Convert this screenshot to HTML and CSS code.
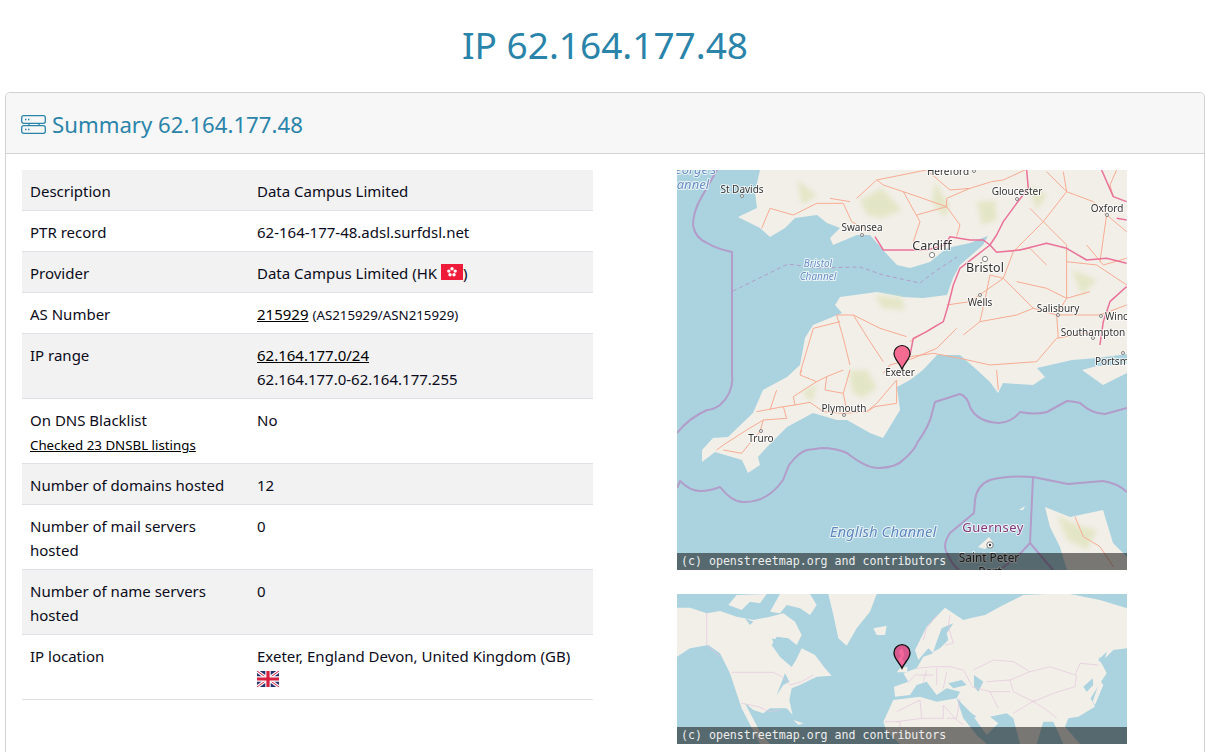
FILE: index.html
```html
<!DOCTYPE html>
<html lang="en">
<head>
  <meta charset="UTF-8" />
  <title>IP 62.164.177.48</title>
  <link rel="stylesheet" href="styles.css">
</head>
<body>

  <h1 class="page-title">IP 62.164.177.48</h1>

  <div class="card">
    <div class="card-header">
      <svg class="server-icon" viewBox="0 0 25 19" fill="none" stroke="currentColor" stroke-width="1.3">
        <rect x=".7" y=".7" width="23.600" height="7.600" rx="2"/>
        <rect x=".7" y="10.700" width="23.600" height="7.600" rx="2"/>
        <path d="M8 8.500v2M18 8.500v2"/>
        <path d="M4 4.500h1.400M7 4.500h1.400M4 14.500h1.400M7 14.500h1.400"/>
      </svg>
      <h2>Summary 62.164.177.48</h2>
    </div>

    <div class="card-body">
      <table class="info">
        <tr><td>Description</td><td>Data Campus Limited</td></tr>
        <tr><td>PTR record</td><td>62-164-177-48.adsl.surfdsl.net</td></tr>
        <tr>
          <td>Provider</td>
          <td>Data Campus Limited (HK <svg class="flag" viewBox="0 0 22 16"><rect width="22" height="16" fill="#ee1c3a"/><g fill="#fff"><circle cx="11" cy="4.800" r="1.700"/><circle cx="14.200" cy="7.100" r="1.700"/><circle cx="13" cy="10.800" r="1.700"/><circle cx="9" cy="10.800" r="1.700"/><circle cx="7.800" cy="7.100" r="1.700"/></g><circle cx="11" cy="8.200" r=".7" fill="#ee1c3a"/></svg>)</td>
        </tr>
        <tr><td>AS Number</td><td><a href="#">215929</a> <small>(AS215929/ASN215929)</small></td></tr>
        <tr><td>IP range</td><td><a href="#">62.164.177.0/24</a><br>62.164.177.0-62.164.177.255</td></tr>
        <tr><td>On DNS Blacklist<br><small><a href="#">Checked 23 DNSBL listings</a></small></td><td>No</td></tr>
        <tr><td>Number of domains hosted</td><td>12</td></tr>
        <tr><td>Number of mail servers hosted</td><td>0</td></tr>
        <tr><td>Number of name servers hosted</td><td>0</td></tr>
        <tr>
          <td>IP location</td>
          <td>Exeter, England Devon, United Kingdom (GB)<br>
            <svg class="flag" viewBox="0 0 22 16"><rect width="22" height="16" fill="#22306e"/><path d="M0 0L22 16M22 0L0 16" stroke="#fff" stroke-width="3.200"/><path d="M0 0L22 16M22 0L0 16" stroke="#d8203f" stroke-width="1"/><path d="M11 0V16M0 8H22" stroke="#fff" stroke-width="5.400"/><path d="M11 0V16M0 8H22" stroke="#d8203f" stroke-width="3.200"/></svg>
          </td>
        </tr>
      </table>

      <div class="maps">
        <div class="map map-local">
          <svg viewBox="0 0 450 400">
            <rect width="450" height="400" fill="#aad3df"/>
            <path class="land" d="M83 0L78 22 80 38 61 47 83 58 93 67 108 58 118 48 140 45 150 53 163 58 153 68 156 75 180 65 193 65 206 80 220 95 233 98 253 92 270 78 293 73 313 65 326 42 313 62 306 75 283 95 276 108 270 125 246 128 226 127 200 122 163 127 158 135 165 143 136 155 128 168 123 195 110 207 86 220 76 243 51 267 36 268 25 280 25 292 38 282 65 290 71 303 83 295 81 287 90 277 110 257 136 243 160 250 170 250 193 263 206 268 223 240 220 217 233 210 246 200 260 185 283 185 300 200 313 212 321 223 326 213 356 215 368 207 360 198 395 190 420 188 450 184V0Z"/>
            <path class="land" d="M405 200L420 196 450 194V203L426 215ZM368 337L393 347 426 340 436 373 450 387V400H390L383 377 373 357ZM301 377L312 367 316 372 308 379ZM342 340L348 336 346 340Z"/>
            <g class="green">
              <path d="M183 30L205 18 225 40 205 48 190 45Z"/>
              <path d="M258 12L272 35 268 48 255 32Z"/>
              <path d="M300 32L318 30 320 50 305 55Z"/>
              <path d="M198 125L225 128 228 140 205 138Z"/>
              <path d="M172 201L190 200 200 218 185 228 175 222Z"/>
              <path d="M125 222L140 215 135 232Z"/>
              <path d="M380 345L400 355 420 360 410 380 390 370ZM350 15L370 25 360 40ZM395 100L420 110 405 125ZM120 10L140 25 125 35Z"/>
            </g>
            <g class="sea-line">
              <path d="M40 0L24 28Q16 42 16 55Q18 68 30 73Q40 79 55 82L55 205Q57 222 43 235Q36 240 30 240Q12 248 0 263"/>
              <path d="M0 318L3 311Q13 321 23 321Q33 321 43 317Q55 332 66 332Q90 333 106 310L112 295Q122 282 130 280L145 278Q158 278 170 283Q190 299 203 298Q220 297 226 290Q238 280 240 273Q253 255 255 243L258 232 283 224Q290 226 293 237Q300 252 322 253Q335 252 343 242Q358 245 370 242L390 231Q400 232 403 233Q415 244 428 244L450 238"/>
              <path d="M450 322Q440 313 426 311L391 314 356 307Q330 305 313 310Q300 315 298 330L297 343 273 363Q265 375 270 383Q275 395 282 400"/>
              <path d="M356 307L353 373 340 387 325 398M353 373L376 400"/>
            </g>
            <path class="dashed" d="M56 121L111 94 140 98 183 97 206 105 243 113 256 103 280 87"/>

            <g transform="translate(-7 -5) scale(.3333)">
              <g class="road">
                <path d="M300 130L370 150 440 115 520 115 545 170 600 200M480 100L540 110M700 80L750 170 730 230M640 60L620 45 770 15M300 130L275 190M620 45L560 100M700 80L640 60"/>
                <path d="M740 150L830 125 830 100 900 70 965 50 1000 45M830 125L870 180 860 215M1000 45L1065 15M700 80L830 125M770 15L840 75 900 70"/>
                <path d="M1120 170L1190 240 1190 290 1190 400 1160 450 1165 520M1080 130L1120 170 1030 260 1000 340 960 330 950 380 930 470 880 510"/>
                <path d="M1120 170L1190 80 1270 110 1310 150 1300 220 1290 290M1000 340L1090 430 1160 450 1290 450M830 420L900 410 1000 340M930 470L1040 450 1090 430"/>
                <path d="M860 490L800 550 730 580 660 600 640 625M720 575L790 565 870 580 960 600 1100 590 1160 520 1270 500M1190 400L1260 380"/>
                <path d="M500 450L550 450 630 490 710 515M500 450L520 520 540 600M550 450L600 530 640 590M510 470L430 490 390 625M720 530L800 480"/>
                <path d="M1340 15L1320 60 1330 95M1250 240L1300 300 1370 280M1010 260L1080 250 1130 300M1180 20L1190 80 1130 20M1310 150L1370 200M1190 290L1280 300 1340 340 1370 360M1040 350L1130 370 1190 400M1290 450L1370 420"/>
              </g>
              <g class="motorway">
                <path d="M1070 15L1075 70 1040 115 1000 170 980 210 960 240 940 225 900 225 840 215 825 240 770 255 700 255 640 255 615 215"/>
                <path d="M960 240L980 262 1050 255 1130 235 1190 250 1250 285 1310 280 1370 295"/>
                <path d="M960 240L870 310 850 360 835 420 820 470 770 500 730 520 720 570"/>
                <path d="M1370 365L1320 410 1300 470 1290 540M1295 15L1330 95 1370 110M1340 160L1370 165"/>
              </g>
            </g>
            <g transform="translate(-7 200) scale(.3333)">
              <g class="road">
                <path d="M395 0L390 15 440 35 470 20 520 0M440 35L370 80 375 105 340 110 260 125M375 105L420 97 460 125 520 130 590 125 615 110 680 100 680 30"/>
                <path d="M470 20L465 60 520 70 530 120M540 0L520 70M340 110L350 145 280 150 230 180 160 225 140 240M280 150L270 185 235 225 215 250 160 240"/>
                <path d="M320 60L300 120M680 30L620 100 590 125M980 0L985 60M1215 440L1240 500 1290 530 1330 590"/>
              </g>
            </g>

            <g class="channel">
              <text class="cut" x="39" y="4" text-anchor="end">eorge's</text>
              <text class="cut" x="32" y="19" text-anchor="end">annel</text>
              <text x="141" y="97" text-anchor="middle">Bristol</text>
              <text x="141" y="110" text-anchor="middle">Channel</text>
              <text class="big" x="206" y="367" text-anchor="middle">English Channel</text>
            </g>
            <g class="town">
              <circle cx="297" cy="1" r="1.500"/><circle cx="65" cy="26" r="1.500"/><circle cx="340" cy="29" r="1.500"/><circle cx="430" cy="45" r="1.500"/><circle cx="185" cy="65" r="1.500"/><circle cx="303" cy="125" r="1.500"/><circle cx="381" cy="145" r="1.500"/><circle cx="416" cy="168" r="1.500"/><circle cx="424" cy="146" r="1.500"/><circle cx="446" cy="183" r="1.500"/><circle cx="167" cy="245" r="1.500"/><circle cx="84" cy="261" r="1.500"/>
              <circle cx="255" cy="85" r="2.600"/><circle cx="308" cy="89" r="2.600"/>
              <circle cx="313" cy="375" r="3.200"/>
            </g>
            <circle cx="313" cy="375" r="1.200" fill="#333"/>
            <g class="label">
              <text x="271" y="5" text-anchor="middle">Hereford</text>
              <text x="65" y="23" text-anchor="middle">St Davids</text>
              <text x="340" y="25" text-anchor="middle">Gloucester</text>
              <text x="430" y="42" text-anchor="middle">Oxford</text>
              <text x="185" y="61" text-anchor="middle">Swansea</text>
              <text x="303" y="136" text-anchor="middle">Wells</text>
              <text x="381" y="142" text-anchor="middle">Salisbury</text>
              <text x="416" y="166" text-anchor="middle">Southampton</text>
              <text x="428" y="150">Winchester</text>
              <text x="418" y="195">Portsmouth</text>
              <text x="223" y="206" text-anchor="middle">Exeter</text>
              <text x="167" y="242" text-anchor="middle">Plymouth</text>
              <text x="84" y="272" text-anchor="middle">Truro</text>
              <text class="big" x="255" y="80" text-anchor="middle">Cardiff</text>
              <text class="big" x="308" y="102" text-anchor="middle">Bristol</text>
              <text class="mid" x="312" y="392" text-anchor="middle">Saint Peter</text>
              <text class="mid" x="313" y="406" text-anchor="middle">Port</text>
              <text class="island" x="316" y="362" text-anchor="middle">Guernsey</text>
            </g>
            <path class="pin" d="M225 199C222 192 217 189 217 183.500A8 8 0 0 1 233 183.500C233 189 228 192 225 199Z"/>
          </svg>
          <div class="map-credit">(c) openstreetmap.org and contributors</div>
        </div>

        <div class="map map-world">
          <svg viewBox="21 27 1350 450">
            <rect x="21" y="27" width="1350" height="450" fill="#aad3df"/>
            <g class="land">
              <path d="M21 68L60 68 110 85 150 78 200 95 250 105 300 95 340 85 375 110 395 150 380 180 355 160 320 155 305 180 330 215 365 245 378 225 395 190 435 210 465 250 485 272 440 275 420 285 390 300 365 310 358 345 368 390 350 370 300 370 280 385 250 375 225 355 270 440 300 477H270L215 370 180 265 150 205 115 180 60 190 21 215Z"/>
              <path d="M475 27H620L600 80 560 130 530 182 505 160 490 90Z"/>
              <path d="M610 130L650 122 645 150 620 150Z"/>
              <path d="M175 60L200 30 290 27 270 55 240 50 215 75ZM300 80L330 27H420L440 60 420 90 390 70 350 60 330 85Z"/>
              <path d="M735 195L770 125 825 68 880 105 900 100 945 90 1000 60 1060 30 1130 27H1200L1290 45 1371 70V190L1330 195 1300 225 1285 215 1310 265 1290 295 1262 340 1275 365 1225 395 1195 400 1185 425 1230 477H1180L1150 410 1120 410 1100 477H1050L1030 400 1010 385 960 395 985 415 950 450 900 380 860 340 870 320 830 310 800 330 770 290 740 300 720 330 675 335 672 305 715 290 700 265 740 250 760 215 790 205 775 190 745 225Z"/>
              <path d="M640 410L670 345 750 335 800 350 860 340 880 400 920 450 950 477H690L650 440Z"/>
              <path d="M690 250L712 245 712 262 680 262Z"/>
              <path d="M1290 285L1300 300 1275 360 1268 350ZM370 405L400 415 385 420Z"/>
            </g>
            <g class="inland-sea">
              <path d="M790 200L800 170 815 130 850 115 830 145 835 165 810 190Z"/>
              <path d="M835 295L875 285 890 300 850 310Z"/>
              <path d="M912 270L940 290 925 320 912 305Z"/>
              <path d="M890 375L920 395 905 400ZM1270 300L1250 320 1240 305 1268 280ZM1285 225L1310 200 1300 240Z"/>
              <path d="M305 160L340 170 375 225 365 245 330 215Z"/>
              <path d="M320 330L345 265 358 290 340 300ZM225 100L250 110 240 120Z"/>
            </g>
            <g class="border">
              <path d="M110 85V180L150 215M185 262H310L335 275 360 300 395 290 430 270M215 355L265 365 300 380 330 375"/>
              <path d="M800 90L770 130 760 165M840 90L835 125 850 175 825 180M740 250L790 245 840 245 880 255 905 300M910 255L970 225 1030 230 1080 260 1140 245 1215 270 1230 235 1285 240"/>
              <path d="M950 290L1020 285 1080 260M1020 285L1030 320 1090 350 1130 375 1160 400M1090 350L1150 325 1215 305 1220 270M1095 345L1030 385M960 320L1020 320M905 305L960 320 985 370"/>
              <path d="M770 255L760 290M800 250L800 300M740 270L790 270M830 260L820 310M715 292L740 265M870 340L860 400H830M680 380L750 345 755 400H820V360M755 400L680 410M645 410H690V427M820 360L860 405 880 420"/>
            </g>
            <path class="pin pin-world" d="M696 250C687 229 672 222 672 203A24 24 0 0 1 720 203C720 222 705 229 696 250Z"/>
            <path class="pin-patch" d="M686 198L697 190 703 208 697 222 704 232 696 242 684 226 692 212Z"/>
          </svg>
          <div class="map-credit">(c) openstreetmap.org and contributors</div>
        </div>
      </div>
    </div>
  </div>

</body>
</html>
```

FILE: styles.css
```css
html, body {
  margin: 0;
  height: 752px;
  overflow: hidden;
}

body {
  font-family: "Noto Sans", "Open Sans", sans-serif;
  font-size: 15px;
  line-height: 24px;
  color: #0b0b20;
  background: #fff;
  padding: 0 1px 0 5px;
  box-sizing: border-box;
}

.page-title {
  margin: 0;
  height: 92px;
  padding-top: 22px;
  box-sizing: border-box;
  text-align: center;
  font-size: 37px;
  line-height: 46px;
  font-weight: 400;
  color: #2a84aa;
}

.card {
  border: 1px solid #d2d2d2;
  border-radius: 5px;
}

.card-header {
  display: flex;
  align-items: center;
  gap: 6px;
  height: 57px;
  padding: 3px 0 0 15px;
  background: #f7f7f7;
  border-bottom: 1px solid #d2d2d2;
  border-radius: 5px 5px 0 0;
  color: #2a84aa;
}

.card-header h2 {
  margin: 0;
  font-size: 22.200px;
  font-weight: 400;
}

.server-icon {
  width: 25px;
  height: 19px;
}

.card-body {
  display: grid;
  grid-template-columns: 571px 1fr;
  padding: 16px;
}

.info {
  border-collapse: collapse;
  width: 571px;
  align-self: start;
  table-layout: fixed;
}

.info td {
  padding: 9px 8px 7px;
  vertical-align: top;
  border-bottom: 1px solid #dee2e6;
}

.info td:first-child {
  width: 211px;
}

.info tr:nth-child(odd) {
  background: #f2f2f2;
}

.info a {
  color: #000;
}

.info small {
  font-size: 13.300px;
  line-height: 1;
}

.flag {
  width: 22px;
  height: 16px;
  vertical-align: -1px;
}

.maps {
  display: flex;
  flex-direction: column;
  gap: 24px;
  padding-left: 84px;
}

.map {
  position: relative;
  width: 450px;
}

.map svg {
  display: block;
  width: 450px;
  filter: blur(0.35px);
}

.map-local svg {
  height: 400px;
}

.map-world svg {
  height: 150px;
}

.map-credit {
  position: absolute;
  left: 0;
  right: 0;
  bottom: 0;
  height: 17px;
  padding-left: 4px;
  background: rgba(0, 0, 0, 0.5);
  color: #eee;
  font-family: "DejaVu Sans Mono", monospace;
  font-size: 11.600px;
  line-height: 17px;
  white-space: nowrap;
}

/* map drawing */
.land {
  fill: #f2efe9;
}

.green {
  filter: blur(2.500px);
}

.green path {
  fill: #e3e6c6;
}

.sea-line path {
  fill: none;
  stroke: #b29cc9;
  stroke-width: 2;
  stroke-linejoin: round;
}

.dashed {
  fill: none;
  stroke: #b29cc9;
  stroke-width: 1;
  stroke-dasharray: 4 3;
}

.road path {
  fill: none;
  stroke: #f8ab92;
  stroke-width: 3;
  stroke-linejoin: round;
}

.motorway path {
  fill: none;
  stroke: #ea7299;
  stroke-width: 4.500;
  stroke-linejoin: round;
}

.town circle {
  fill: #fff;
  stroke: #666;
  stroke-width: 0.8;
}

.map text {
  font-family: "Noto Sans", sans-serif;
  paint-order: stroke;
  stroke: rgba(255, 255, 255, 0.75);
  stroke-width: 2px;
  stroke-linejoin: round;
}

.label text {
  font-size: 10px;
  fill: #333;
}

.label .big {
  font-size: 12.500px;
}

.label .mid {
  font-size: 11.800px;
}

.label .island {
  font-size: 13px;
  fill: #85387f;
  letter-spacing: 0.4px;
}

.channel text {
  font-size: 10px;
  font-style: italic;
  fill: #6a8fc4;
}

.channel .big {
  font-size: 15px;
  fill: #5f88c0;
}

.channel .cut {
  font-size: 13px;
}

.pin {
  fill: #f66b92;
  stroke: #111;
  stroke-width: 1.200;
}

.pin-world {
  fill: #d65a90;
  stroke-width: 4;
}

.pin-patch {
  fill: #f2669a;
}

.inland-sea path {
  fill: #aad3df;
}

.border path {
  fill: none;
  stroke: #e4c4dc;
  stroke-width: 2;
}
```
